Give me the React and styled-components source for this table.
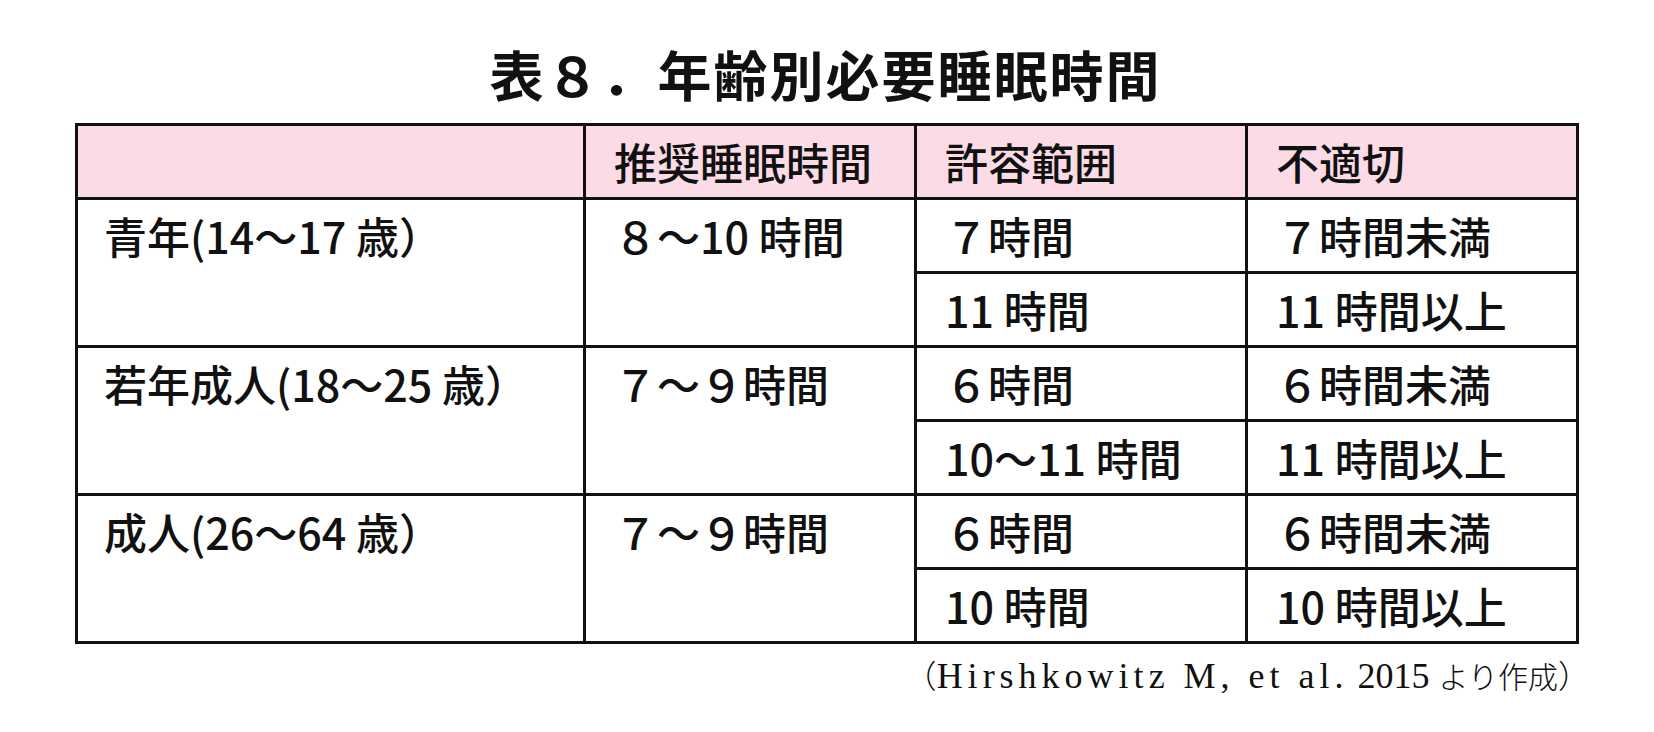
import React from "react";
import styled, { createGlobalStyle } from "styled-components";

const Global = createGlobalStyle`
  html, body { margin: 0; padding: 0; background: #ffffff; }
  body { font-family: "Noto Sans CJK JP", "Noto Sans", sans-serif; color: #111; }
`;

const Page = styled.div`
  width: 1654px;
  height: 732px;
  box-sizing: border-box;
  padding: 42px 0 0 75px;
  background: #fff;
`;

const Sheet = styled.div`
  width: 1501px;
  display: flex;
  flex-direction: column;
`;

const Title = styled.h1`
  margin: 0 0 17px 0;
  height: 64px;
  line-height: 64px;
  text-align: center;
  font-family: "Noto Sans CJK JP", sans-serif;
  font-weight: 700;
  font-size: 54px;
  letter-spacing: 2px;
  color: #111;
`;

const Table = styled.table`
  width: 1501px;
  border-collapse: collapse;
  table-layout: fixed;
`;

const Col = styled.col`
  width: ${(p) => p.$w}px;
`;

const HeadRow = styled.tr`
  background: #fadbe6;
`;

const Row = styled.tr``;

const Cell = styled.td`
  height: 71px;
  padding: 0 0 0 ${(p) => (p.$first ? 26 : 28)}px;
  border: 3px solid #111;
  font-family: "Noto Sans CJK JP", sans-serif;
  font-weight: 500;
  font-size: 43px;
  line-height: 71px;
  text-align: left;
  vertical-align: ${(p) => (p.$top ? "top" : "middle")};
  white-space: nowrap;
  color: #111;
`;

const HeadCell = styled(Cell).attrs({ as: "th" })``;

const Caption = styled.div`
  margin-top: 10px;
  text-align: right;
  font-family: "Liberation Serif", "Noto Sans CJK JP", serif;
  font-size: 36px;
  line-height: 40px;
  color: #111;
  white-space: nowrap;
`;

const Paren = styled.span`
  font-family: "Noto Sans CJK JP", sans-serif;
  font-weight: 300;
  font-size: 32px;
  margin-right: ${(p) => (p.$close ? -14 : 0)}px;
`;

const Latin = styled.span`
  letter-spacing: 5px;
`;

const Ja = styled.span`
  font-family: "Noto Sans CJK JP", sans-serif;
  font-weight: 300;
  font-size: 30px;
`;

const groups = [
  {
    age: "青年(14〜17 歳）",
    rec: "８〜10 時間",
    rows: [
      ["７時間", "７時間未満"],
      ["11 時間", "11 時間以上"],
    ],
  },
  {
    age: "若年成人(18〜25 歳）",
    rec: "７〜９時間",
    rows: [
      ["６時間", "６時間未満"],
      ["10〜11 時間", "11 時間以上"],
    ],
  },
  {
    age: "成人(26〜64 歳）",
    rec: "７〜９時間",
    rows: [
      ["６時間", "６時間未満"],
      ["10 時間", "10 時間以上"],
    ],
  },
];

export default function App() {
  return (
    <>
      <Global />
      <Page>
        <Sheet>
          <Title>表８．年齢別必要睡眠時間</Title>
          <Table>
            <colgroup>
              <Col $w={508} />
              <Col $w={331} />
              <Col $w={331} />
              <Col $w={331} />
            </colgroup>
            <thead>
              <HeadRow>
                <HeadCell $first></HeadCell>
                <HeadCell>推奨睡眠時間</HeadCell>
                <HeadCell>許容範囲</HeadCell>
                <HeadCell>不適切</HeadCell>
              </HeadRow>
            </thead>
            <tbody>
              {groups.map((g) =>
                g.rows.map((r, i) => (
                  <Row key={g.age + i}>
                    {i === 0 && (
                      <>
                        <Cell $first $top rowSpan={2}>{g.age}</Cell>
                        <Cell $top rowSpan={2}>{g.rec}</Cell>
                      </>
                    )}
                    <Cell>{r[0]}</Cell>
                    <Cell>{r[1]}</Cell>
                  </Row>
                ))
              )}
            </tbody>
          </Table>
          <Caption>
            <Paren>（</Paren>
            <Latin>Hirshkowitz M, et al.</Latin> 2015 <Ja>より作成</Ja>
            <Paren $close>）</Paren>
          </Caption>
        </Sheet>
      </Page>
    </>
  );
}
